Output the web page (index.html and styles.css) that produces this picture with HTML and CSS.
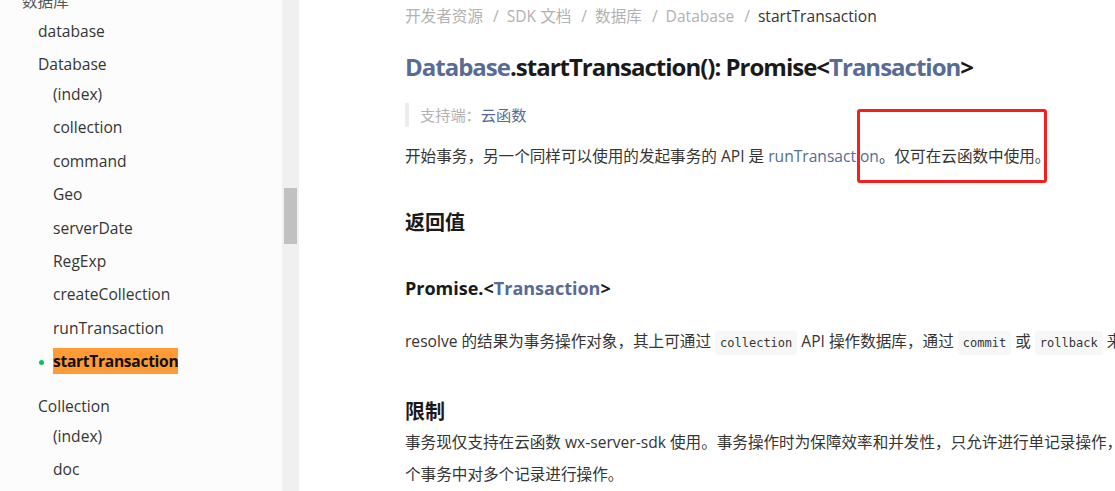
FILE: index.html
```html
<!DOCTYPE html>
<html lang="zh-CN">
<head>
    <meta charset="UTF-8">
    <meta name="viewport" content="width=device-width, initial-scale=1.0">
    <title>Database.startTransaction</title>
    <link rel="stylesheet" href="styles.css">
</head>
<body>
    <div class="page">
        <nav class="sidebar">
            <div class="nav-title">数据库</div>
            <ul class="nav">
                <li><a class="nav-link">database</a></li>
                <li>
                    <a class="nav-link">Database</a>
                    <ul class="sub">
                        <li><a class="sub-link">(index)</a></li>
                        <li><a class="sub-link">collection</a></li>
                        <li><a class="sub-link">command</a></li>
                        <li><a class="sub-link">Geo</a></li>
                        <li><a class="sub-link">serverDate</a></li>
                        <li><a class="sub-link">RegExp</a></li>
                        <li><a class="sub-link">createCollection</a></li>
                        <li><a class="sub-link">runTransaction</a></li>
                        <li class="active"><a class="sub-link"><span class="mark">startTransaction</span></a></li>
                    </ul>
                </li>
                <li>
                    <a class="nav-link">Collection</a>
                    <ul class="sub">
                        <li><a class="sub-link">(index)</a></li>
                        <li><a class="sub-link">doc</a></li>
                    </ul>
                </li>
            </ul>
        </nav>
        <div class="scrollbar"><div class="thumb"></div></div>

        <main class="content">
            <div class="breadcrumb">
                <a>开发者资源</a><span class="sep">/</span><a>SDK 文档</a><span class="sep">/</span><a>数据库</a><span class="sep">/</span><a>Database</a><span class="sep">/</span><span class="current">startTransaction</span>
            </div>

            <h1><a>Database</a>.startTransaction(): Promise&lt;<a>Transaction</a>&gt;</h1>

            <blockquote>支持端：<a>云函数</a></blockquote>

            <p class="intro">开始事务，另一个同样可以使用的发起事务的 API 是 <a>runTransaction</a>。仅可在云函数中使用。</p>

            <h2>返回值</h2>

            <h3>Promise.&lt;<a>Transaction</a>&gt;</h3>

            <p class="resolve">resolve 的结果为事务操作对象，其上可通过 <code>collection</code> API 操作数据库，通过 <code>commit</code> 或 <code>rollback</code> 来结束或终止事务。</p>

            <h2>限制</h2>

            <p class="limit">事务现仅支持在云函数 wx-server-sdk 使用。事务操作时为保障效率和并发性，只允许进行单记录操作，不允许进行批量操作，但可以在一个事务中对多个记录进行操作。</p>

            <!-- screenshot annotation -->
            <div class="annot"></div>
        </main>
    </div>
</body>
</html>
```

FILE: styles.css
```css
html, body {
    margin: 0;
    padding: 0;
    height: 100%;
    overflow: hidden;
}

body {
    font-family: "Open Sans", "Noto Sans CJK SC", sans-serif;
    color: #353535;
    background-color: #ffffff;
}

a {
    color: #576b95;
    text-decoration: none;
}

.page {
    display: flex;
    height: 491px;
}

/* sidebar */

.sidebar {
    width: 282px;
    flex-shrink: 0;
    background-color: #fcfcfc;
    font-size: 15.6px;
    overflow: hidden;
}

.nav-title {
    margin-top: -12px;
    padding-left: 22px;
    line-height: 27px;
    color: #555555;
}

.nav, .sub {
    list-style: none;
    margin: 0;
    padding: 0;
}

.nav-link, .sub-link {
    display: block;
    color: #353535;
}

.nav-link {
    padding-left: 38px;
    line-height: 33px;
}

.sub {
    margin-top: -3px;
    margin-bottom: 11px;
}

.sub-link {
    padding-left: 53px;
    line-height: 33.4px;
}

.active {
    position: relative;
}

.active::before {
    content: "";
    position: absolute;
    left: 39px;
    top: 15px;
    width: 5px;
    height: 5px;
    border-radius: 50%;
    background-color: #07c160;
}

.mark {
    background-color: #ff9a35;
    color: #111;
    font-weight: bold;
    letter-spacing: -0.3px;
    padding: 2px 0;
}

.scrollbar {
    width: 17px;
    flex-shrink: 0;
    background-color: #f0f0f0;
}

.thumb {
    margin: 188px 0 0 2px;
    width: 13px;
    height: 56px;
    background-color: #c1c1c1;
}

/* content */

.content {
    position: relative;
    width: 955px;
    flex-shrink: 0;
    padding-left: 106px;
    font-size: 15.6px;
}

.breadcrumb {
    line-height: 32px;
    color: #b2b2b2;
}

.breadcrumb a {
    color: #b2b2b2;
}

.breadcrumb .sep {
    margin: 0 8px 0 10px;
}

.breadcrumb .current {
    color: #353535;
}

h1 {
    margin: 18px 0 0;
    font-size: 24px;
    line-height: 34px;
    letter-spacing: -1px;
    color: #1a1a1a;
}

blockquote {
    margin: 19px 0 0;
    padding-left: 11px;
    border-left: 4px solid #ececec;
    line-height: 24px;
    font-size: 15.2px;
    color: #b2b2b2;
}

p {
    margin: 0;
}

.intro {
    margin-top: 15px;
    line-height: 28px;
}

h2 {
    margin: 38px 0 0;
    font-size: 20px;
    line-height: 30px;
    color: #1a1a1a;
}

h3 {
    margin: 36px 0 0;
    font-size: 18px;
    line-height: 28px;
    color: #1a1a1a;
}

.resolve {
    margin-top: 23px;
    line-height: 32px;
}

.limit {
    margin-top: -1px;
    line-height: 32px;
}

code {
    font-family: "DejaVu Sans Mono", monospace;
    font-size: 12px;
    background-color: #f7f7f7;
    padding: 5px 5px;
    border-radius: 3px;
}

.annot {
    position: absolute;
    left: 558px;
    top: 109px;
    width: 184px;
    height: 68px;
    border: 3px solid #f51f1f;
    border-radius: 3px;
}
```
